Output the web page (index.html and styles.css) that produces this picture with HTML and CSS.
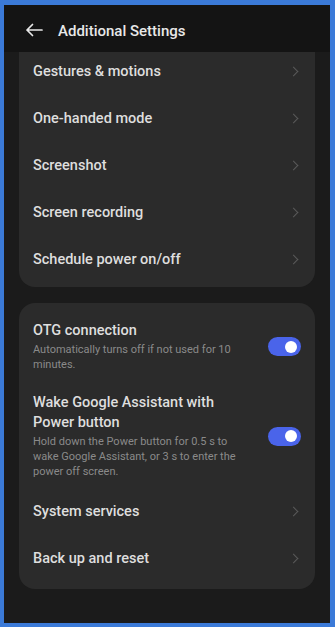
FILE: index.html
```html
<!DOCTYPE html>
<html lang="en">
<head>
<meta charset="utf-8">
<title>Additional Settings</title>
<link rel="stylesheet" href="styles.css">
</head>
<body>
<div class="frame">
  <header class="topbar">
    <svg class="back" width="18" height="14" viewBox="0 0 18 14" aria-hidden="true">
      <path d="M17 7H2M7.5 1.5L2 7l5.5 5.5" fill="none" stroke="#e8e8e8" stroke-width="1.7" stroke-linecap="round" stroke-linejoin="round"/>
    </svg>
    <h1 class="title">Additional Settings</h1>
  </header>
  <main class="content">
    <section class="card card-first">
      <div class="row"><span class="label">Gestures &amp; motions</span><span class="chev"></span></div>
      <div class="row"><span class="label">One-handed mode</span><span class="chev"></span></div>
      <div class="row"><span class="label">Screenshot</span><span class="chev"></span></div>
      <div class="row"><span class="label">Screen recording</span><span class="chev"></span></div>
      <div class="row"><span class="label">Schedule power on/off</span><span class="chev"></span></div>
    </section>
    <section class="card">
      <div class="row row-toggle">
        <div class="text">
          <div class="label">OTG connection</div>
          <div class="desc">Automatically turns off if not used for 10 minutes.</div>
        </div>
        <span class="toggle"><span class="knob"></span></span>
      </div>
      <div class="row row-toggle">
        <div class="text">
          <div class="label">Wake Google Assistant with Power button</div>
          <div class="desc">Hold down the Power button for 0.5 s to wake Google Assistant, or 3 s to enter the power off screen.</div>
        </div>
        <span class="toggle"><span class="knob"></span></span>
      </div>
      <div class="row"><span class="label">System services</span><span class="chev"></span></div>
      <div class="row"><span class="label">Back up and reset</span><span class="chev"></span></div>
    </section>
  </main>
</div>
</body>
</html>
```
FILE: styles.css
```css
* { box-sizing: border-box; }
html, body { margin: 0; padding: 0; }
body {
  width: 335px;
  height: 627px;
  background: #3b7ad8;
  padding: 5px 5px 4px 4px;
  font-family: Roboto, "Noto Sans", sans-serif;
  overflow: hidden;
}
.frame {
  width: 326px;
  height: 618px;
  background: #1b1b1b;
  display: flex;
  flex-direction: column;
  overflow: hidden;
}
.topbar {
  height: 47px;
  flex: none;
  background: #141414;
  display: flex;
  align-items: center;
  padding: 4px 0 0 21px;
  position: relative;
  z-index: 1;
}
.back { flex: none; margin-top: -1px; }
.title {
  margin: 0 0 0 15px;
  font-size: 15px;
  font-weight: 500;
  color: #e8e8e8;
  letter-spacing: 0;
}
.content {
  flex: 1;
  overflow: hidden;
  padding: 0 15px;
  display: flex;
  flex-direction: column;
  gap: 16px;
}
.card {
  background: #2b2b2b;
  border-radius: 16px;
  padding: 7px 0;
}
.card-first {
  margin-top: -4px;
  padding-top: 0;
  padding-bottom: 4px;
  border-top-left-radius: 0;
  border-top-right-radius: 0;
}
.row {
  min-height: 47px;
  display: flex;
  align-items: center;
  justify-content: space-between;
  padding: 0 14px;
}
.label {
  font-size: 14.5px;
  font-weight: 500;
  color: #dedede;
  line-height: 20px;
}
.chev {
  width: 7px;
  height: 7px;
  border-top: 1.5px solid #5a5a5a;
  border-right: 1.5px solid #5a5a5a;
  transform: rotate(45deg);
  margin-right: 4px;
}
.row-toggle {
  padding-top: 11px;
  padding-bottom: 10px;
}
.row-toggle + .row-toggle {
  padding-bottom: 9px;
}
.text {
  width: 212px;
}
.desc {
  margin-top: 1px;
  font-size: 11px;
  line-height: 15px;
  color: #8a8a8a;
}
.toggle {
  flex: none;
  width: 33px;
  height: 19px;
  border-radius: 10px;
  background: #4a64ea;
  display: flex;
  align-items: center;
  justify-content: flex-end;
  padding-right: 4px;
}
.knob {
  width: 12px;
  height: 12px;
  border-radius: 50%;
  background: #ffffff;
}
```
